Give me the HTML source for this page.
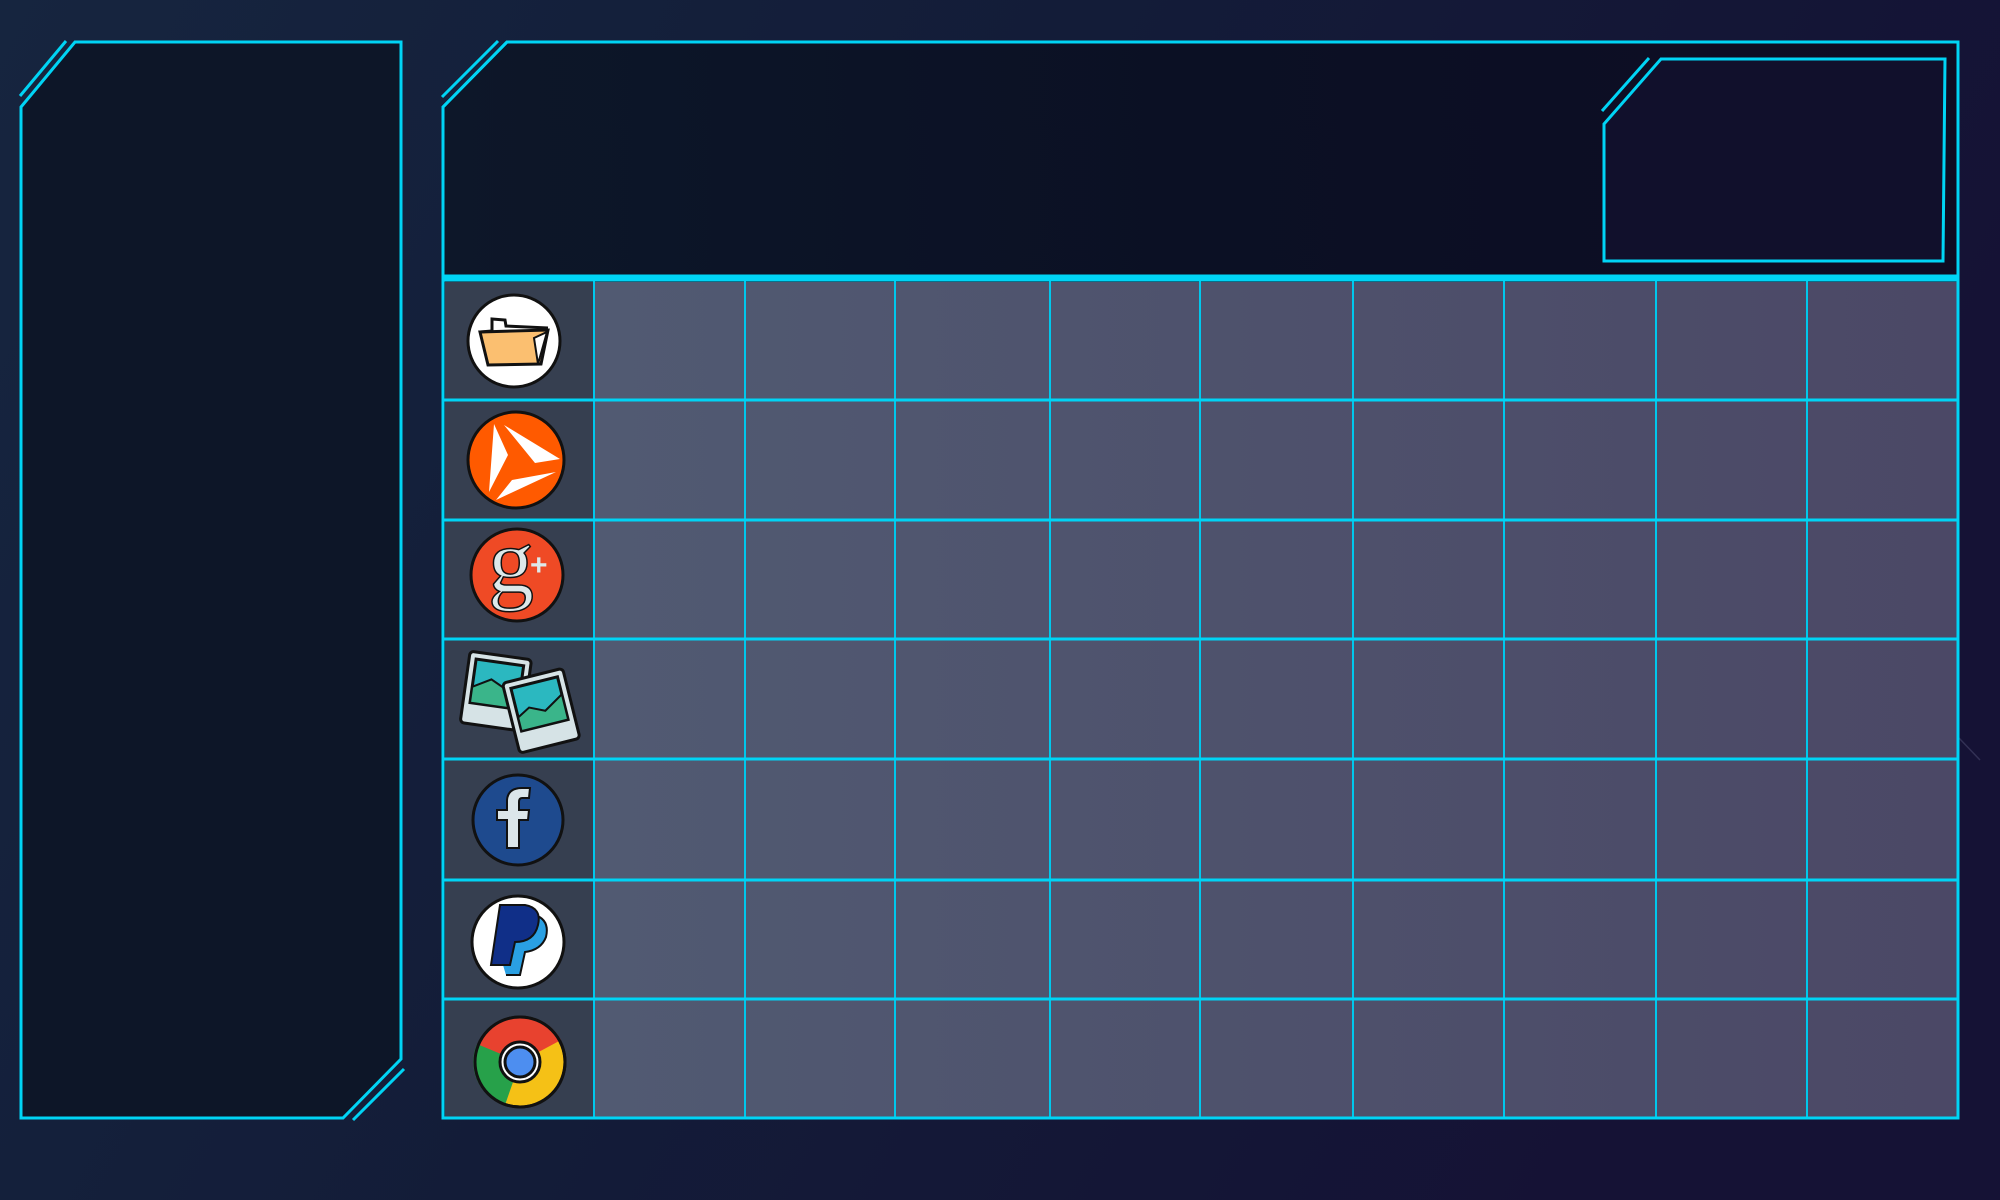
<!DOCTYPE html>
<html><head><meta charset="utf-8"><style>
html,body{margin:0;padding:0;width:2000px;height:1200px;overflow:hidden;background:#141f3a}
</style></head><body>
<svg width="2000" height="1200" viewBox="0 0 2000 1200" xmlns="http://www.w3.org/2000/svg">
<defs>
<linearGradient id="bg" x1="0" y1="0" x2="1" y2="0.3">
<stop offset="0" stop-color="#16253f"/><stop offset="0.5" stop-color="#131c38"/><stop offset="1" stop-color="#151235"/>
</linearGradient>
<linearGradient id="hd" x1="0" y1="0" x2="1" y2="0">
<stop offset="0" stop-color="#0d1729"/><stop offset="0.5" stop-color="#0b1024"/><stop offset="1" stop-color="#0e0c24"/>
</linearGradient>
<linearGradient id="cell" x1="0" y1="0" x2="1" y2="0">
<stop offset="0" stop-color="#515a72"/><stop offset="1" stop-color="#4b4866"/>
</linearGradient>
</defs>
<rect width="2000" height="1200" fill="url(#bg)"/>
<g stroke="#6a6a90" stroke-width="1.5" opacity="0.35" fill="none">
<path d="M1690,345 L1760,530 L1650,595 L1390,925 L1680,905 L1760,530 L1900,585"/>
<path d="M1550,130 L1690,345 L1650,595 L1680,905"/>
<path d="M1760,530 L1980,760"/>
</g>
<!-- left panel -->
<path d="M21,107 L75,42 L401,42 L401,1059 L343,1118 L21,1118 Z" fill="#0d1628" stroke="#00d4f5" stroke-width="3"/>
<path d="M20,96 L66,41" stroke="#00d4f5" stroke-width="3"/>
<path d="M353,1120 L404,1069" stroke="#00d4f5" stroke-width="3"/>
<!-- main panel -->
<path d="M443,107 L507,42 L1958,42 L1958,1118 L443,1118 Z" fill="url(#hd)" stroke="#00d4f5" stroke-width="3"/>
<path d="M442,97 L498,41" stroke="#00d4f5" stroke-width="3"/>
<!-- grid cells -->
<rect x="594" y="282" width="1363" height="836" fill="url(#cell)"/>
<rect x="445" y="282" width="149" height="836" fill="#363f50"/>
<g stroke="#00c8ec" stroke-width="2">
<line x1="594" y1="280" x2="594" y2="1118"/><line x1="745" y1="280" x2="745" y2="1118"/>
<line x1="895" y1="280" x2="895" y2="1118"/><line x1="1050" y1="280" x2="1050" y2="1118"/>
<line x1="1200" y1="280" x2="1200" y2="1118"/><line x1="1353" y1="280" x2="1353" y2="1118"/>
<line x1="1504" y1="280" x2="1504" y2="1118"/><line x1="1656" y1="280" x2="1656" y2="1118"/>
<line x1="1807" y1="280" x2="1807" y2="1118"/>
</g>
<g stroke="#00d4f5" stroke-width="3">
<line x1="443" y1="400" x2="1958" y2="400"/><line x1="443" y1="520" x2="1958" y2="520"/>
<line x1="443" y1="639" x2="1958" y2="639"/><line x1="443" y1="759" x2="1958" y2="759"/>
<line x1="443" y1="880" x2="1958" y2="880"/><line x1="443" y1="999" x2="1958" y2="999"/>
</g>
<line x1="443" y1="278" x2="1958" y2="278" stroke="#00d4f5" stroke-width="7"/>
<path d="M443,107 L507,42 L1958,42 L1958,1118 L443,1118 Z" fill="none" stroke="#00d4f5" stroke-width="3"/>
<!-- top right box -->
<path d="M1604,124 L1661,59 L1945,59 L1943,261 L1604,261 Z" fill="#11102c" stroke="#00d4f5" stroke-width="3"/>
<path d="M1602,111 L1649,58" stroke="#00d4f5" stroke-width="3"/>
<!-- icons -->
<g stroke="#111" stroke-width="3">
<circle cx="514" cy="341" r="46" fill="#fff"/>
<path d="M480,332 L548,330 L541,364 L488,365 Z" fill="#fbbf70"/>
<path d="M480,332 L492,331 L492,319 L505,320 L506,326 L548,328" fill="none"/>
<path d="M534,338 L547,332 L538,364 Z" fill="#fff" stroke-width="2"/>
<circle cx="516" cy="460" r="48" fill="#ff5a00"/>
<path d="M494,424 L489,492 L508,455 Z M504,425 L560,459 L535,463 Z M496,500 L556,472 L512,480 Z" fill="#fff" stroke="none"/>
<circle cx="517" cy="575" r="46" fill="#ef4a25"/>
<text x="488" y="592" font-family="Liberation Serif,serif" font-size="92" fill="#dde9ea" stroke="#111" stroke-width="1.5">g</text>
<text x="530" y="575" font-family="Liberation Sans,sans-serif" font-size="30" font-weight="bold" fill="#dde9ea" stroke="none">+</text>
<g transform="rotate(8 495 690)"><rect x="465" y="655" width="62" height="72" rx="4" fill="#d6e3e6"/><rect x="472" y="662" width="48" height="44" fill="#2bb8c0"/><path d="M472,690 L490,680 L520,695 L520,706 L472,706Z" fill="#3ab58a" stroke-width="2"/></g>
<g transform="rotate(-14 540 710)"><rect x="510" y="675" width="62" height="72" rx="4" fill="#d6e3e6"/><rect x="517" y="682" width="48" height="44" fill="#2bb8c0"/><path d="M517,712 L530,705 L545,712 L565,700 L565,726 L517,726Z" fill="#3ab58a" stroke-width="2"/></g>
<circle cx="518" cy="820" r="45" fill="#1e4a8e"/>
<path d="M507,848 L507,820 L497,820 L497,810 L507,810 L507,800 Q508,788 522,788 L530,788 L529,798 L522,798 Q519,798 519,802 L519,810 L529,810 L528,820 L519,820 L519,848 Z" fill="#dce6ea" stroke-width="2"/>
<circle cx="518" cy="942" r="46" fill="#fff"/>
<path d="M503,965 L511,915 L535,915 Q550,920 546,937 Q541,950 525,952 L520,975 L506,975" fill="#2aa0e3" stroke-width="2"/>
<path d="M491,965 L500,905 L525,905 Q542,908 538,925 Q534,942 515,942 L510,965 Z" fill="#102f88" stroke-width="2"/>
<circle cx="520" cy="1062" r="45" fill="#f5c116"/>
<path d="M520,1062 L478,1050 A45,45 0 0 1 561,1040 Z" fill="#e8422f" stroke="none"/>
<path d="M520,1062 L477,1044 A45,45 0 0 0 505,1105 Z" fill="#27a14a" stroke="none"/>
<circle cx="520" cy="1062" r="45" fill="none"/>
<circle cx="520" cy="1062" r="20" fill="#fff"/>
<circle cx="520" cy="1062" r="15" fill="#4d8ef0"/>
</g>
</svg>
</body></html>
